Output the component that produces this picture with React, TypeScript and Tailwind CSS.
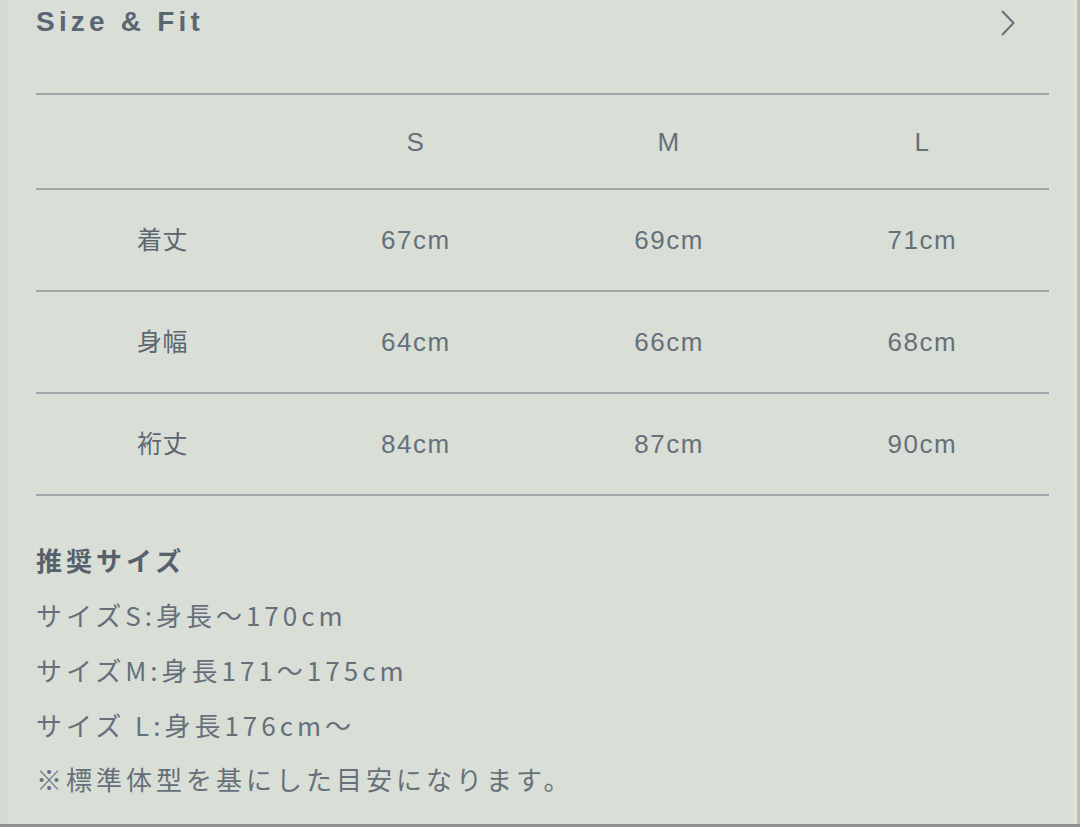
import React from "react";

const sizes = ["S", "M", "L"];

const rows = [
  { label: "着丈", values: ["67cm", "69cm", "71cm"] },
  { label: "身幅", values: ["64cm", "66cm", "68cm"] },
  { label: "裄丈", values: ["84cm", "87cm", "90cm"] },
];

const notes = [
  "サイズS:身長〜170cm",
  "サイズM:身長171〜175cm",
  "サイズ L:身長176cm〜",
  "※標準体型を基にした目安になります。",
];

const cjk = "font-['Noto_Sans_CJK_JP','Noto_Sans',sans-serif]";
const latin = "font-['Liberation_Sans','Noto_Sans_CJK_JP',sans-serif]";

const App: React.FC = () => {
  return (
    <div className="w-[1080px] h-[827px] overflow-hidden bg-[#d9dfd6] flex flex-col">
      <div className="flex flex-1">
        <div className="w-[8px] bg-[#d4dbd1]" />
        <div className="flex-1 pl-[28px] pr-[24px]">
          {/* header */}
          <div className="h-[93px] flex items-start justify-between">
            <h1
              className={`${latin} mt-[5px] text-[28px] leading-[34px] font-bold tracking-[4.2px] text-[#5b6673]`}
            >
              Size &amp; Fit
            </h1>
            <svg
              className="mt-[10px] mr-[34px]"
              width="14"
              height="26"
              viewBox="0 0 14 26"
              fill="none"
            >
              <path
                d="M1.5 1.5 L12.5 13 L1.5 24.5"
                stroke="#6a7079"
                strokeWidth="2"
                strokeLinecap="round"
                strokeLinejoin="round"
              />
            </svg>
          </div>

          {/* table */}
          <div className={`${latin} text-[26px] text-[#66707a] tracking-[1.5px]`}>
            <div className="grid grid-cols-4 border-t-2 border-[#a0a5ab] h-[95px] items-center text-center">
              <div />
              {sizes.map((s) => (
                <div key={s} className="mt-[2px]">
                  {s}
                </div>
              ))}
            </div>
            {rows.map((r) => (
              <div
                key={r.label}
                className="grid grid-cols-4 border-t-2 border-[#a0a5ab] h-[102px] items-center text-center"
              >
                <div className={`${cjk} text-[25px] -mt-[2px] tracking-[0.5px] text-[#5d6771]`}>{r.label}</div>
                {r.values.map((v) => (
                  <div key={v}>{v}</div>
                ))}
              </div>
            ))}
            <div className="border-t-2 border-[#a0a5ab]" />
          </div>

          {/* notes */}
          <div className={`${cjk} mt-[36px] text-[26px] tracking-[4px]`}>
            <div className="leading-[55px] font-bold text-[#56616c]">推奨サイズ</div>
            {notes.map((n, i) => (
              <div
                key={n}
                className={`${i === 3 ? "leading-[53px]" : "leading-[55px]"} text-[#66707a]`}
              >
                {n}
              </div>
            ))}
          </div>
        </div>
        <div className="w-[7px] bg-[#dfe3dc] border-r-[3px] border-[#b9bdb6]" />
      </div>
      <div className="h-[3px] bg-[#8c918a]" />
    </div>
  );
};

export default App;
